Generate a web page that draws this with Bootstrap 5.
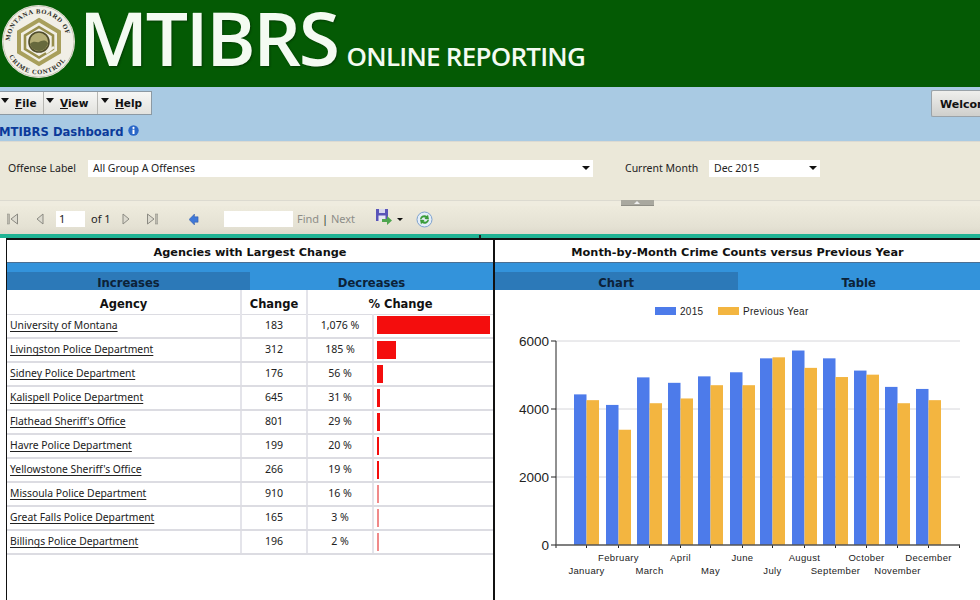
<!DOCTYPE html>
<html lang="en">
<head>
<meta charset="utf-8">
<title>MTIBRS Dashboard</title>
<link href="https://cdn.jsdelivr.net/npm/bootstrap@5.3.0/dist/css/bootstrap.min.css" rel="stylesheet">
<style>
html,body{margin:0;height:600px;overflow:hidden;background:#fff}
body{font-family:"Noto Sans","DejaVu Sans",sans-serif;color:#111;width:980px}
.hdr{height:87px;background:#045a04;color:#f4fbf2;padding-left:2px;overflow:hidden}
.hdr-logo{width:73px;height:73px;flex:none;margin-top:5px}
.hdr-big{font-family:"Open Sans",sans-serif;font-size:75px;font-weight:600;line-height:75px;letter-spacing:-2.400px;margin-left:4px;flex:none;text-shadow:1px 1px 2px rgba(0,0,0,.35)}
.hdr-sub{font-family:"Open Sans",sans-serif;font-size:26px;font-weight:600;line-height:1;letter-spacing:-.75px;margin-left:9px;margin-top:43px;flex:none}
.band{height:54px;background:#a9cae3}
.menu-row{height:36px;padding-top:4px}
.menu-group{height:24px;margin-left:-3px;border:1px solid #8c99a3;border-left:0;background:linear-gradient(#f7f7f5,#e2e2de);font:bold 10.5px "DejaVu Sans",sans-serif}
.menu-item{border-right:1px solid #b7b7b3;height:100%;flex:none;padding-left:2px}
.menu-item:first-child{width:47px;padding-left:4px}
.menu-item:nth-child(2){width:54px}
.menu-item:last-child{width:53px;border-right:0;padding-left:3px}
.caret-dn{width:0;height:0;border:4px solid transparent;border-top:5px solid #111;border-bottom:0;margin-right:6px;margin-top:-5px}
.menu-item u{text-decoration-thickness:1px}
.welcome{height:27px;width:49px;overflow:hidden;margin-left:auto;margin-top:-1px;border:1px solid #9aa2a8;border-right:0;background:linear-gradient(#efefed,#cfcfcc);font:bold 11px "DejaVu Sans",sans-serif;padding:7px 0 0 8px;white-space:nowrap;border-radius:2px 0 0 2px;color:#111}
.dash-title{font:bold 11.6px "DejaVu Sans",sans-serif;color:#0b3a9a;line-height:18px;margin-left:-1px}
.info-dot{width:11px;height:11px;margin-left:4px;margin-top:-3px;flex:none}
.filters{height:59px;background:#ebe8d9;border-top:1px solid #dcdad2;font-size:10.5px;padding-top:18px;padding-left:8px;color:#222}
.fake-sel{height:17px;background:#fff;padding:0 0 1px 5px;line-height:16px;flex:none}
.sel-a{width:505px}
.sel-b{width:111px}
.lbl-a{width:80px;flex:none;line-height:17px}
.lbl-b{width:84px;flex:none;margin-left:32px;line-height:17px}
.sel-arrow{width:0;height:0;border:4px solid transparent;border-top:4px solid #111;border-bottom:0;margin-left:auto;margin-right:3px}
.split{height:6px;background:#efecdf;border-top:1px solid #dcdad0;position:relative}
.split-handle{position:absolute;left:621px;top:-1px;width:33px;height:6px;background:#a9a89f;border-bottom:1px solid #8f8e86}
.split-handle::after{content:"";position:absolute;left:13px;top:1px;border:3px solid transparent;border-bottom:3px solid #eee;border-top:0}
.tools{height:28px;background:linear-gradient(#eeebdd,#e4e1d3 75%,#ddd9cb);font-size:11px;padding:0 0 2px 7px;color:#222}
.tools svg{flex:none}
.ti-prev{margin-left:17px}
.ti-next{margin-left:12px}
.ti-last{margin-left:16px}
.ti-back{margin-left:31px}
.ti-save{margin-left:23px;margin-top:-3px}
.ti-drop{width:0;height:0;border:3px solid transparent;border-top:3px solid #111;border-bottom:0;margin-left:4px}
.ti-refresh{margin-left:13px}
.pg-input{width:29px;height:16px;background:#fff;line-height:16px;padding-left:3px;margin-left:12px}
.pg-of{margin-left:6px;width:19px;white-space:nowrap}
.find-input{width:69px;height:16px;background:#fff;margin-left:25px}
.muted-t{color:#8d8d88;margin-left:4px;width:56px;white-space:nowrap}
.find-sep{color:#333}
.teal{height:4px;background:#1fb394;position:relative}
.teal::after{content:"";position:absolute;left:479px;top:1px;width:2px;height:3px;background:#222}
.panels{height:362px;border-top:2px solid #111;margin-left:6px}
.panel-l{width:489px;border-left:1px solid #111;border-right:2px solid #111;flex:none}
.panel-r{flex:1}
.ptitle{height:23px;font:bold 11.3px/25px "DejaVu Sans",sans-serif;text-align:center;background:#fff;border-bottom:1px solid #4b6f92;color:#111}
.tabs{height:27px;background:#3393db;padding-top:9px}
.tab-x{flex:0 0 50%;font:bold 11.6px/22px "DejaVu Sans",sans-serif;text-align:center;color:#0c2238;height:18px}
.tab-on{background:#2c79b8}
.ttbl{width:486px;border-collapse:collapse;table-layout:fixed;font-size:10.6px;color:#222}
.ttbl col.c1{width:234px}
.ttbl col.c2,.ttbl col.c3{width:66px}
.ttbl th{font:bold 11.5px "DejaVu Sans",sans-serif;color:#111;text-align:center;height:24px;padding:5px 0 0;border-right:2px solid #e4e4ea;border-bottom:1px solid #dcdce2}
.ttbl td{height:24px;padding:0;text-align:center;border-right:2px solid #e4e4ea;border-bottom:2px solid #dcdce2}
.ttbl th:last-child,.ttbl td:last-child{border-right:0}
.ttbl td.nm{text-align:left;padding-left:3px;white-space:nowrap;font-size:10.35px}
.ttbl td.nm u{text-decoration-thickness:1px;text-underline-offset:2px}
.ttbl td.barc{text-align:left;padding:0 0 0 3px;vertical-align:middle}
.rbar{height:18px;background:#f40d0d;margin-bottom:1px}
.rbar-thin{background:#f08a8a}
.chart{display:block;width:485px;height:310px}
.chart text{font-family:"Liberation Sans",Arial,sans-serif;fill:#222}
</style>
</head>
<body>
<header class="hdr d-flex align-items-start">
  <svg class="hdr-logo" viewBox="0 0 73 73" aria-hidden="true">
    <defs><path id="ringT" d="M8 37a28.500 28.500 0 1 1 57 0"/><path id="ringB" d="M6.500 50a33 33 0 0 0 60 0"/></defs>
    <circle cx="36.500" cy="36.500" r="36.500" fill="#f1efe6"/>
    <circle cx="36.500" cy="36.500" r="35.500" fill="none" stroke="#bdbba8" stroke-width=".8"/>
    <text font-family="Liberation Serif,serif" font-weight="700" font-size="6.600" fill="#2b2b25" letter-spacing=".7"><textPath href="#ringT" startOffset="1%">MONTANA BOARD OF</textPath></text>
    <text font-family="Liberation Serif,serif" font-weight="700" font-size="6.600" fill="#2b2b25" letter-spacing=".8"><textPath href="#ringB" startOffset="2%">CRIME CONTROL</textPath></text>
    <path d="M37 15 57 27V47L37 59 17 47V27Z" fill="none" stroke="#a89f5c" stroke-width="4"/>
    <path d="M37 22 51 30.500V44L37 52.500 23 44V30.500Z" fill="none" stroke="#978e4c" stroke-width="2.600"/>
    <path d="M44 48 52 42" stroke="#f1efe6" stroke-width="2.500"/>
    <circle cx="37" cy="37" r="10" fill="#b3ad75" stroke="#4f4c2b" stroke-width="1.600"/>
    <path d="M28 39c4-4 7-1 9-2s6-3 9 1c-1 5-5 8-9 8s-8-3-9-7z" fill="#66693d"/>
  </svg>
  <div class="hdr-big">MTIBRS</div>
  <div class="hdr-sub">ONLINE REPORTING</div>
</header>

<section class="band">
  <div class="menu-row d-flex align-items-start">
    <div class="menu-group d-flex align-items-center">
      <div class="menu-item d-flex align-items-center"><span class="caret-dn"></span><span><u>F</u>ile</span></div>
      <div class="menu-item d-flex align-items-center"><span class="caret-dn"></span><span><u>V</u>iew</span></div>
      <div class="menu-item d-flex align-items-center"><span class="caret-dn"></span><span><u>H</u>elp</span></div>
    </div>
    <div class="welcome">Welcome</div>
  </div>
  <div class="dash-title d-flex align-items-center">MTIBRS Dashboard
    <svg class="info-dot" viewBox="0 0 11 11" aria-hidden="true"><circle cx="5.500" cy="5.500" r="5.200" fill="#2a67c8"/><circle cx="5.500" cy="2.900" r="1.100" fill="#fff"/><rect x="4.500" y="4.600" width="2" height="4.400" fill="#fff"/></svg>
  </div>
</section>

<section class="filters d-flex align-items-start">
  <span class="lbl-a">Offense Label</span>
  <div class="fake-sel sel-a d-flex align-items-center">All Group A Offenses<span class="sel-arrow"></span></div>
  <span class="lbl-b">Current Month</span>
  <div class="fake-sel sel-b d-flex align-items-center">Dec 2015<span class="sel-arrow"></span></div>
</section>
<div class="split"><div class="split-handle"></div></div>

<section class="tools d-flex align-items-center">
  <svg width="12" height="12" viewBox="0 0 12 12" aria-hidden="true"><rect x="0" y="1" width="2.500" height="10" fill="#bbb9ae" stroke="#8b8a82" stroke-width=".5"/><path d="M10.500 1 4 6l6.500 5z" fill="#dcdacf" stroke="#8b8a82"/></svg>
  <svg class="ti-prev" width="8" height="12" viewBox="0 0 8 12" aria-hidden="true"><path d="M7 1 1 6l6 5z" fill="#dcdacf" stroke="#8b8a82"/></svg>
  <div class="pg-input">1</div>
  <span class="pg-of">of 1</span>
  <svg class="ti-next" width="8" height="12" viewBox="0 0 8 12" aria-hidden="true"><path d="M1 1l6 5-6 5z" fill="#dcdacf" stroke="#8b8a82"/></svg>
  <svg class="ti-last" width="12" height="12" viewBox="0 0 12 12" aria-hidden="true"><path d="M1.500 1 8 6l-6.500 5z" fill="#dcdacf" stroke="#8b8a82"/><rect x="9.500" y="1" width="2.500" height="10" fill="#bbb9ae" stroke="#8b8a82" stroke-width=".5"/></svg>
  <svg class="ti-back" width="10" height="11" viewBox="0 0 11 12" aria-hidden="true"><path d="M6 0 0 6l6 6V9h4V3H6z" fill="#3f78d8" stroke="#274f9e" stroke-width=".5"/></svg>
  <div class="find-input"></div>
  <span class="muted-t">Find <span class="find-sep">|</span> Next</span>
  <svg class="ti-save" width="17" height="17" viewBox="0 0 17 17" aria-hidden="true"><rect x="0" y="0" width="12" height="12" fill="#5a55b8"/><rect x="3" y="0" width="6" height="4" fill="#d8d8ee"/><rect x="2.500" y="6.500" width="7" height="5.500" fill="#e8e8f4"/><path d="M6 10h5V7l5 4.500-5 4.500v-3H6z" fill="#4fa64f"/></svg>
  <span class="ti-drop"></span>
  <svg class="ti-refresh" width="17" height="17" viewBox="0 0 17 17" aria-hidden="true"><circle cx="8.500" cy="8.500" r="7.500" fill="#e4eef8" stroke="#7ea2cf"/><path d="M4 8a4.500 4.500 0 0 1 7-3l1-1.500 1 5-4.500-.5 1-1.200A3 3 0 0 0 5.500 8z" fill="#3a9c3a"/><path d="M13 9a4.500 4.500 0 0 1-7 3l-1 1.500-1-5 4.500.5-1 1.200A3 3 0 0 0 11.500 9z" fill="#3a9c3a"/></svg>
</section>
<div class="teal"></div>

<main class="panels d-flex">
  <section class="panel-l">
    <div class="ptitle">Agencies with Largest Change</div>
    <div class="tabs d-flex"><div class="tab-x tab-on">Increases</div><div class="tab-x">Decreases</div></div>
    <table class="ttbl">
      <colgroup><col class="c1"><col class="c2"><col class="c3"><col></colgroup>
      <thead><tr><th>Agency</th><th>Change</th><th colspan="2">% Change</th></tr></thead>
      <tbody>
        <tr><td class="nm"><u>University of Montana</u></td><td>183</td><td>1,076 %</td><td class="barc"><div class="rbar" style="width:113px"></div></td></tr>
        <tr><td class="nm"><u>Livingston Police Department</u></td><td>312</td><td>185 %</td><td class="barc"><div class="rbar" style="width:19px"></div></td></tr>
        <tr><td class="nm"><u>Sidney Police Department</u></td><td>176</td><td>56 %</td><td class="barc"><div class="rbar" style="width:6px"></div></td></tr>
        <tr><td class="nm"><u>Kalispell Police Department</u></td><td>645</td><td>31 %</td><td class="barc"><div class="rbar" style="width:3px"></div></td></tr>
        <tr><td class="nm"><u>Flathead Sheriff's Office</u></td><td>801</td><td>29 %</td><td class="barc"><div class="rbar" style="width:3px"></div></td></tr>
        <tr><td class="nm"><u>Havre Police Department</u></td><td>199</td><td>20 %</td><td class="barc"><div class="rbar" style="width:2px"></div></td></tr>
        <tr><td class="nm"><u>Yellowstone Sheriff's Office</u></td><td>266</td><td>19 %</td><td class="barc"><div class="rbar" style="width:2px"></div></td></tr>
        <tr><td class="nm"><u>Missoula Police Department</u></td><td>910</td><td>16 %</td><td class="barc"><div class="rbar rbar-thin" style="width:2px"></div></td></tr>
        <tr><td class="nm"><u>Great Falls Police Department</u></td><td>165</td><td>3 %</td><td class="barc"><div class="rbar rbar-thin" style="width:2px"></div></td></tr>
        <tr><td class="nm"><u>Billings Police Department</u></td><td>196</td><td>2 %</td><td class="barc"><div class="rbar rbar-thin" style="width:2px"></div></td></tr>
      </tbody>
    </table>
  </section>
  <section class="panel-r">
    <div class="ptitle">Month-by-Month Crime Counts versus Previous Year</div>
    <div class="tabs d-flex"><div class="tab-x tab-on">Chart</div><div class="tab-x">Table</div></div>
    <svg class="chart" id="chart" viewBox="495 290 485 310" role="img" aria-label="Bar chart of monthly crime counts, 2015 versus previous year"></svg>
  </section>
</main>
<script src="https://cdn.jsdelivr.net/npm/bootstrap@5.3.0/dist/js/bootstrap.bundle.min.js"></script>
<script>
(function(){
  var d=[["January",4430,4260,574,1],["February",4120,3390,606,0],["March",4930,4170,637,1],["April",4770,4310,668,0],["May",4960,4700,698,1],["June",5080,4700,730,0],["July",5490,5520,760,1],["August",5720,5210,792,0],["September",5490,4940,823,1],["October",5130,5010,854,0],["November",4650,4170,885,1],["December",4590,4260,916,0]];
  var base=545,top=341,sc=(base-top)/6000,h='';
  [6000,4000,2000].forEach(function(v){var y=base-v*sc;h+='<line x1="556" x2="960" y1="'+y+'" y2="'+y+'" stroke="#d6d6da"/>';});
  d.forEach(function(r){
    var x=r[3],a=r[1]*sc,b=r[2]*sc;
    h+='<rect x="'+x+'" y="'+(base-a)+'" width="12.500" height="'+a+'" fill="#4d7bea"/>';
    h+='<rect x="'+(x+12.5)+'" y="'+(base-b)+'" width="12.500" height="'+b+'" fill="#f3b540"/>';
    var cx=x+12.5;
    h+='<line x1="'+cx+'" x2="'+cx+'" y1="545" y2="548" stroke="#222"/>';
    h+='<text x="'+cx+'" y="'+(r[4]?574:561)+'" font-size="9.500" letter-spacing=".35" text-anchor="middle">'+r[0]+'</text>';
  });
  h+='<line x1="556" x2="556" y1="341" y2="548" stroke="#222"/><line x1="959.500" x2="959.500" y1="545" y2="548" stroke="#222"/>';
  h+='<line x1="556" x2="960" y1="545" y2="545" stroke="#555" stroke-width="1.500"/>';
  [6000,4000,2000,0].forEach(function(v){var y=base-v*sc;
    h+='<line x1="551" x2="556" y1="'+y+'" y2="'+y+'" stroke="#222"/>';
    h+='<text x="549" y="'+(y+5)+'" font-size="13.500" text-anchor="end">'+v+'</text>';});
  h+='<rect x="655" y="307" width="21" height="8" fill="#4d7bea"/><text x="680" y="315" font-size="10" letter-spacing=".3">2015</text>';
  h+='<rect x="718" y="307" width="21" height="8" fill="#f3b540"/><text x="743" y="315" font-size="10" letter-spacing=".3">Previous Year</text>';
  document.getElementById('chart').innerHTML=h;
})();
</script>
</body>
</html>
